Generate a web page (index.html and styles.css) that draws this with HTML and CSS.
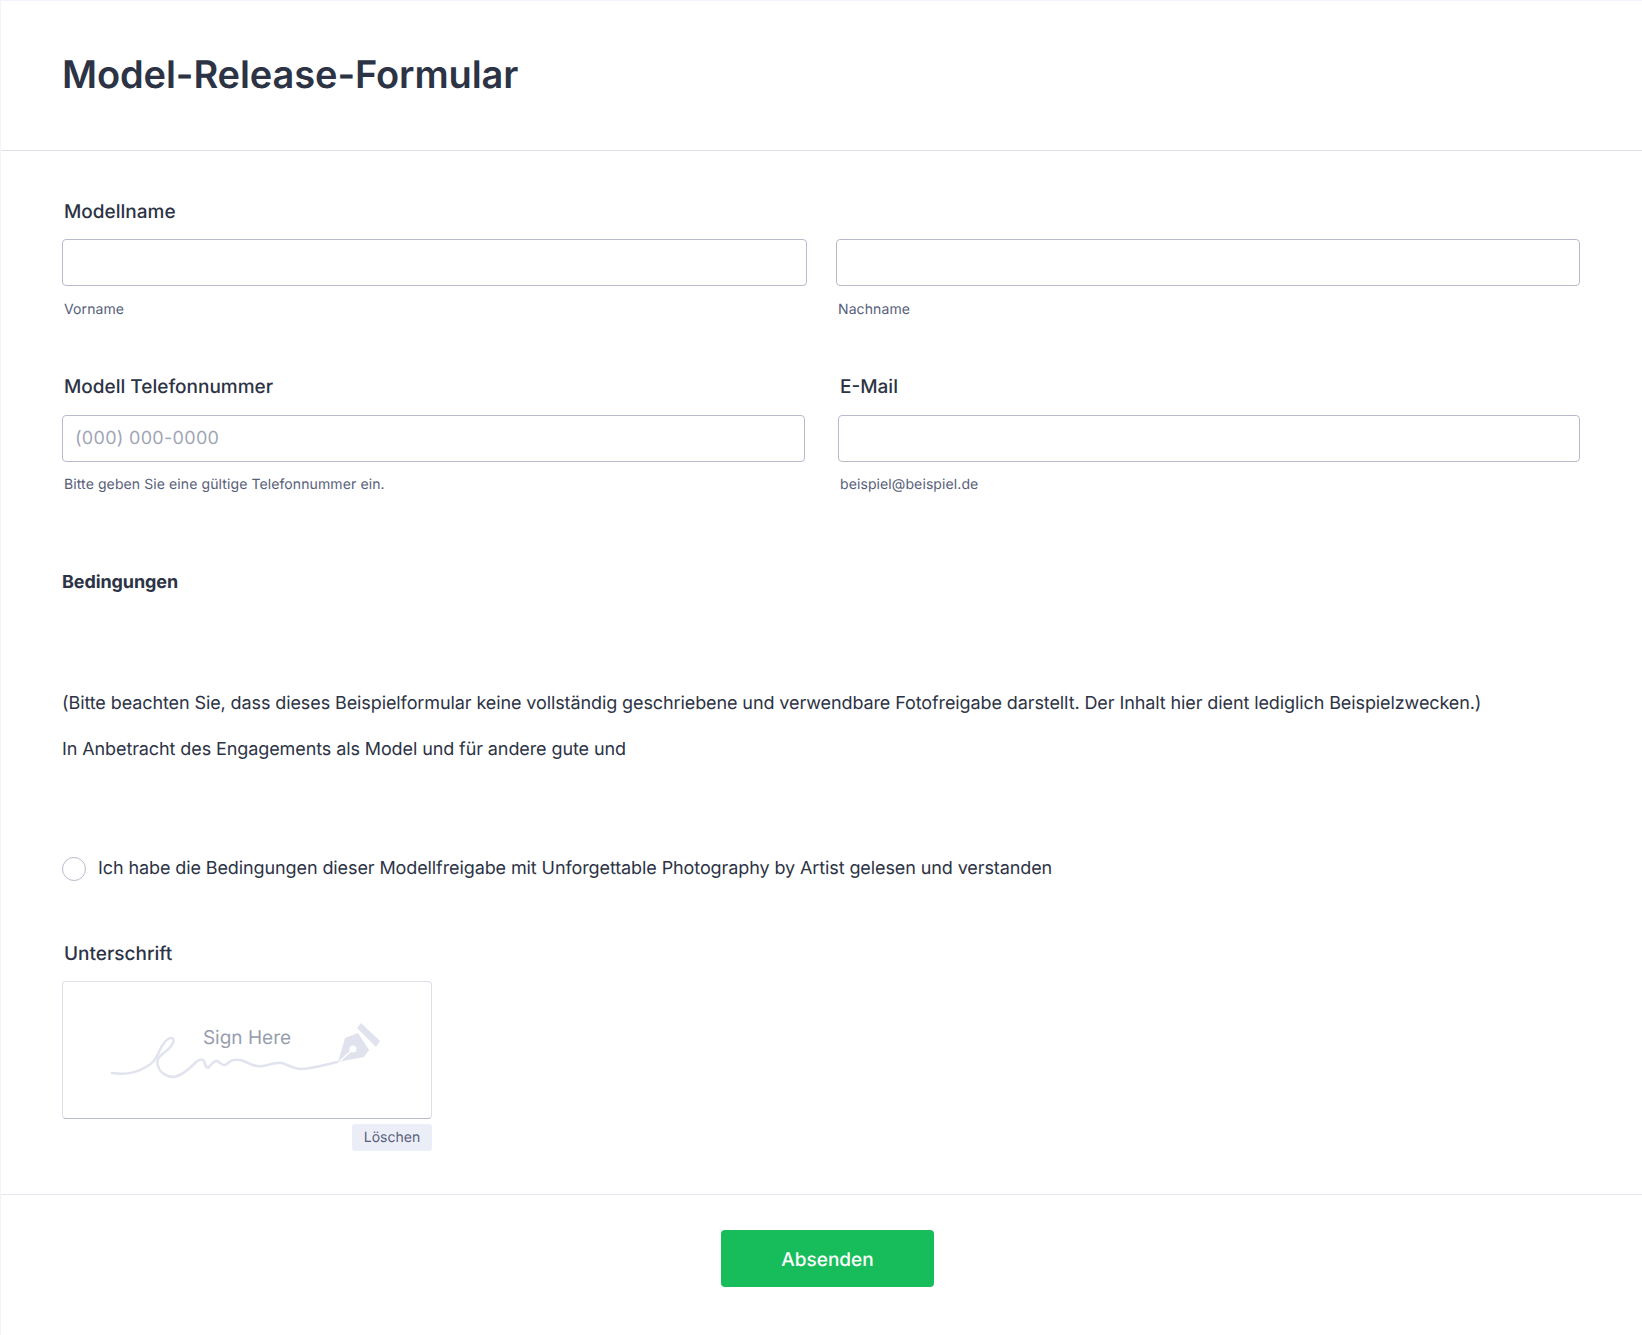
FILE: index.html
```html
<!DOCTYPE html>
<html lang="de">
<head>
    <meta charset="UTF-8">
    <meta name="viewport" content="width=device-width, initial-scale=1.0">
    <title>Model-Release-Formular</title>
    <link rel="stylesheet" href="styles.css">
</head>
<body>
    <div class="form">
        <div class="form-header">
            <h1>Model-Release-Formular</h1>
        </div>
        <div class="form-body">
            <div class="field">
                <label class="field-label">Modellname</label>
                <div class="name-row">
                    <div class="sub-field">
                        <input type="text" class="text-input">
                        <span class="sub-label">Vorname</span>
                    </div>
                    <div class="sub-field">
                        <input type="text" class="text-input">
                        <span class="sub-label">Nachname</span>
                    </div>
                </div>
            </div>
            <div class="contact-row">
                <div class="field">
                    <label class="field-label">Modell Telefonnummer</label>
                    <input type="text" class="text-input" placeholder="(000) 000-0000">
                    <span class="sub-label">Bitte geben Sie eine gültige Telefonnummer ein.</span>
                </div>
                <div class="field">
                    <label class="field-label">E-Mail</label>
                    <input type="text" class="text-input">
                    <span class="sub-label">beispiel@beispiel.de</span>
                </div>
            </div>
            <div class="terms">
                <p class="terms-title">Bedingungen</p>
                <p class="terms-note">(Bitte beachten Sie, dass dieses Beispielformular keine vollständig geschriebene und verwendbare Fotofreigabe darstellt. Der Inhalt hier dient lediglich Beispielzwecken.)</p>
                <p class="terms-text">In Anbetracht des Engagements als Model und für andere gute und</p>
            </div>
            <label class="check-row">
                <span class="check-circle"></span>
                <span>Ich habe die Bedingungen dieser Modellfreigabe mit Unforgettable Photography by Artist gelesen und verstanden</span>
            </label>
            <div class="signature">
                <label class="field-label">Unterschrift</label>
                <div class="sign-box">
                    <span class="sign-text">Sign Here</span>
                    <svg class="sign-art" width="270" height="60" viewBox="0 0 270 60">
                        <path class="sign-line" d="M0 49 C 12 51 24 49 34 43 C 42 39 44 34 47 28 C 50 20 56 13 60 14 C 64 16 60 23 53 28 C 47 32 44 37 46 42 C 48 49 55 53 62 53 C 70 52 77 45 82 40 C 86 36 90 34 92 37 C 93 42 95 45 97 43 C 100 40 102 36 105 37 C 108 38 110 42 113 41 C 116 40 118 36 122 36 C 128 35 132 37 138 40 C 143 42 147 43 151 42 C 157 41 164 38 170 39 C 176 41 181 44 188 45 C 200 45 212 41 225 38"/>
                        <path class="sign-pen" d="M226 38 L233 14 L246 9 L257 26 L252 33 Z"/>
                        <path class="sign-pen" d="M249 -1 L268 17 L264 23 L245 4 Z"/>
                        <path class="sign-slit" d="M240 26 L228 37"/>
                        <circle class="sign-hole" cx="241" cy="25" r="3.5"/>
                    </svg>
                </div>
                <div class="clear-row">
                    <button type="button" class="clear-btn">Löschen</button>
                </div>
            </div>
        </div>
        <div class="form-footer">
            <button type="button" class="submit-btn">Absenden</button>
        </div>
    </div>
</body>
</html>
```

FILE: styles.css
```css
body {
    margin: 0;
    background: #fff;
    font-family: Inter, "Liberation Sans", sans-serif;
    color: #2c3345;
    text-rendering: geometricPrecision;
}
.form {
    height: 1335px;
    box-sizing: border-box;
    border-left: 1px solid #f3f3fe;
    border-top: 1px solid #f3f3fe;
    overflow: hidden;
}
.form-header {
    height: 149px;
    padding: 0 61px;
    display: flex;
    align-items: center;
    border-bottom: 1px solid #dfe1ec;
}
.form-header h1 {
    margin: 0;
    font-size: 38px;
    font-weight: 600;
    line-height: 48px;
    letter-spacing: -0.1px;
    position: relative;
    top: -1px;
}
.form-body {
    padding: 48px 61px 0;
}
.field-label {
    display: block;
    margin: 0 0 14px 2px;
    font-size: 19px;
    font-weight: 500;
    line-height: 26px;
}
.name-row {
    display: grid;
    grid-template-columns: 745px 744px;
    column-gap: 29px;
}
.sub-field, .field {
    min-width: 0;
}
.text-input {
    display: block;
    width: 100%;
    height: 47px;
    box-sizing: border-box;
    padding: 0 12px;
    background: #fff;
    border: 1px solid #b8bbcc;
    border-radius: 4px;
    font-family: inherit;
    font-size: 18px;
    letter-spacing: 0.3px;
    color: #2c3345;
    text-rendering: geometricPrecision;
}
.text-input::placeholder {
    color: #a0a5b5;
}
.sub-label {
    display: block;
    margin: 12px 0 0 2px;
    font-size: 14px;
    line-height: 24px;
    letter-spacing: 0.1px;
    color: #57607a;
}
.contact-row {
    display: grid;
    grid-template-columns: 743px 742px;
    column-gap: 33px;
    margin-top: 52px;
}
.contact-row .field-label {
    margin-bottom: 15px;
}
.contact-row .sub-label {
    margin-top: 11px;
}
.terms {
    margin-top: 72px;
    font-size: 18px;
    line-height: 28px;
    letter-spacing: -0.1px;
}
.terms p {
    margin: 0;
}
.terms-title {
    font-weight: 700;
}
.terms .terms-note {
    margin-top: 93px;
}
.terms .terms-text {
    margin-top: 18px;
}
.check-row {
    display: flex;
    align-items: center;
    gap: 12px;
    margin-top: 91px;
    font-size: 18px;
    line-height: 28px;
    letter-spacing: -0.1px;
}
.check-circle {
    flex: none;
    width: 24px;
    height: 24px;
    box-sizing: border-box;
    border: 1px solid #b8bbcc;
    border-radius: 50%;
}
.signature {
    margin-top: 58px;
}
.sign-box {
    position: relative;
    width: 370px;
    height: 138px;
    box-sizing: border-box;
    border: 1px solid #dcdee8;
    border-bottom-color: #b8bbcc;
    border-radius: 4px;
    text-align: center;
}
.sign-text {
    display: block;
    margin-top: 44px;
    font-size: 19px;
    line-height: 24px;
    color: #979dae;
}
.sign-art {
    position: absolute;
    left: 49px;
    top: 42px;
    overflow: visible;
}
.sign-line {
    fill: none;
    stroke: #e1e3ef;
    stroke-width: 2.5;
    stroke-linecap: round;
}
.sign-pen {
    fill: #e0e2ed;
}
.sign-slit {
    stroke: #fff;
    stroke-width: 1.5;
}
.sign-hole {
    fill: #fff;
}
.clear-row {
    width: 370px;
    display: flex;
    justify-content: flex-end;
    margin-top: 5px;
}
.clear-btn {
    width: 80px;
    height: 27px;
    padding: 0;
    background: #eceef7;
    border: none;
    border-radius: 3px;
    font-family: inherit;
    font-size: 14px;
    color: #57607a;
    text-rendering: geometricPrecision;
}
.form-footer {
    margin-top: 43px;
    padding-top: 35px;
    border-top: 1px solid #e6e7f0;
    display: flex;
    padding-left: 720px;
}
.submit-btn {
    width: 213px;
    height: 57px;
    padding: 1px 0 0;
    background: #18bd5b;
    border: none;
    border-radius: 4px;
    font-family: inherit;
    font-size: 19px;
    font-weight: 500;
    color: #fff;
    text-rendering: geometricPrecision;
}
```
